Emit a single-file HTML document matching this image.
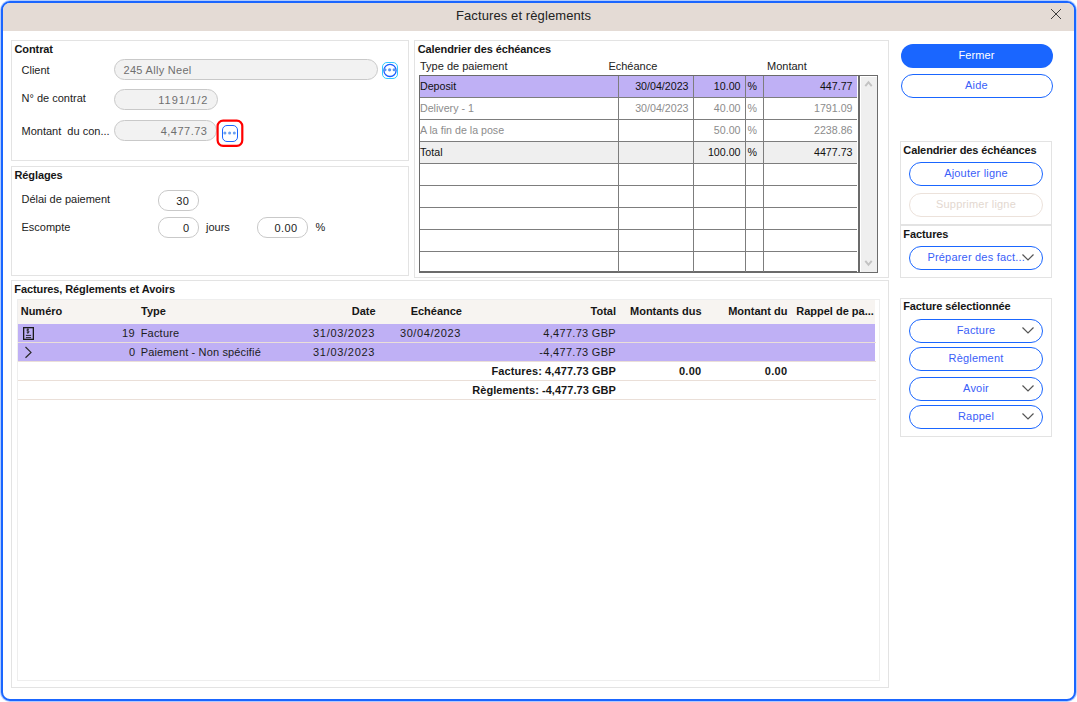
<!DOCTYPE html>
<html><head><meta charset="utf-8"><title>Factures et règlements</title>
<style>
html,body{margin:0;padding:0;background:#fff;}
body{width:1077px;height:702px;position:relative;overflow:hidden;font-family:"Liberation Sans", sans-serif;}
</style></head><body>
<div style="position:absolute;left:1px;top:1px;width:1075px;height:700px;box-sizing:border-box;border:2px solid #1a66ff;border-radius:9px;box-shadow:0 0 0 1px rgba(26,102,255,0.35);background:#fff;"></div>
<div style="position:absolute;left:3px;top:3px;width:1071px;height:28px;box-sizing:border-box;background:#e4dbd5;border-radius:7px 7px 0 0;"></div>
<div style="position:absolute;left:456.00px;top:7.40px;width:600px;line-height:17px;font-size:13px;font-weight:400;color:#222;text-align:left;white-space:nowrap;letter-spacing:0.1px;">Factures et règlements</div>
<svg style="position:absolute;left:1050px;top:8px" width="12" height="12" viewBox="0 0 12 12"><path d="M1 1L11 11M11 1L1 11" stroke="#2a2a2a" stroke-width="0.9" fill="none"/></svg>
<div style="position:absolute;left:11px;top:40px;width:398px;height:121px;box-sizing:border-box;border:1px solid #e3e3e3;"></div>
<div style="position:absolute;left:14.50px;top:42.19px;width:600px;line-height:14px;font-size:11px;font-weight:700;color:#161616;text-align:left;white-space:nowrap;letter-spacing:-0.1px;">Contrat</div>
<div style="position:absolute;left:21.50px;top:63.19px;width:600px;line-height:14px;font-size:11px;font-weight:400;color:#222;text-align:left;white-space:nowrap;">Client</div>
<div style="position:absolute;left:21.50px;top:91.19px;width:600px;line-height:14px;font-size:11px;font-weight:400;color:#222;text-align:left;white-space:nowrap;">N° de contrat</div>
<div style="position:absolute;left:21.50px;top:124.19px;width:600px;line-height:14px;font-size:11px;font-weight:400;color:#222;text-align:left;white-space:nowrap;">Montant&nbsp; du con...</div>
<div style="position:absolute;left:114px;top:59px;width:264px;height:21px;box-sizing:border-box;background:#f2f2f2;border:1px solid #c9c9c9;border-radius:11px;"></div>
<div style="position:absolute;left:123.50px;top:63.19px;width:600px;line-height:14px;font-size:11px;font-weight:400;color:#6f6f6f;text-align:left;white-space:nowrap;letter-spacing:0.3px;">245 Ally Neel</div>
<div style="position:absolute;left:114px;top:89px;width:104px;height:21px;box-sizing:border-box;background:#f2f2f2;border:1px solid #c9c9c9;border-radius:11px;"></div>
<div style="position:absolute;left:-391.70px;top:92.69px;width:600px;line-height:14px;font-size:11px;font-weight:400;color:#6f6f6f;text-align:right;white-space:nowrap;letter-spacing:1.0px;">1191/1/2</div>
<div style="position:absolute;left:114px;top:120px;width:103px;height:21px;box-sizing:border-box;background:#f2f2f2;border:1px solid #c9c9c9;border-radius:11px;"></div>
<div style="position:absolute;left:-392.50px;top:124.19px;width:600px;line-height:14px;font-size:11px;font-weight:400;color:#6f6f6f;text-align:right;white-space:nowrap;letter-spacing:0.5px;">4,477.73</div>
<svg style="position:absolute;left:381px;top:61px" width="18" height="18" viewBox="0 0 18 18"><rect x="1.5" y="1.5" width="15" height="16" rx="4.5" fill="none" stroke="#33c8ff" stroke-width="1"/><circle cx="9" cy="9.4" r="6.1" fill="none" stroke="#1a5cff" stroke-width="1.3"/><circle cx="4" cy="8.8" r="1.5" fill="#5b95ee"/><circle cx="8.6" cy="8.8" r="1.6" fill="#5b95ee"/><circle cx="13.1" cy="8.8" r="1.5" fill="#5b95ee"/></svg>
<svg style="position:absolute;left:216px;top:119px" width="28" height="29" viewBox="0 0 28 29"><rect x="1.6" y="1.6" width="24.7" height="25.2" rx="5.5" fill="none" stroke="#ff0000" stroke-width="2.2"/><rect x="6.5" y="6.5" width="15" height="16" rx="4.5" fill="none" stroke="#1a66ff" stroke-width="1"/><circle cx="8.9" cy="14" r="1.5" fill="#6aa0f0"/><circle cx="13.6" cy="14" r="1.5" fill="#6aa0f0"/><circle cx="18.3" cy="14" r="1.5" fill="#6aa0f0"/></svg>
<div style="position:absolute;left:11px;top:166px;width:398px;height:110px;box-sizing:border-box;border:1px solid #e3e3e3;"></div>
<div style="position:absolute;left:14.50px;top:167.69px;width:600px;line-height:14px;font-size:11px;font-weight:700;color:#161616;text-align:left;white-space:nowrap;letter-spacing:-0.1px;">Réglages</div>
<div style="position:absolute;left:21.50px;top:191.69px;width:600px;line-height:14px;font-size:11px;font-weight:400;color:#222;text-align:left;white-space:nowrap;">Délai de paiement</div>
<div style="position:absolute;left:21.50px;top:219.69px;width:600px;line-height:14px;font-size:11px;font-weight:400;color:#222;text-align:left;white-space:nowrap;">Escompte</div>
<div style="position:absolute;left:158px;top:190px;width:41px;height:21px;box-sizing:border-box;background:#fff;border:1px solid #c9c9c9;border-radius:10px;"></div>
<div style="position:absolute;left:-410.70px;top:194.19px;width:600px;line-height:14px;font-size:11px;font-weight:400;color:#222;text-align:right;white-space:nowrap;letter-spacing:0.4px;">30</div>
<div style="position:absolute;left:158px;top:217px;width:41px;height:21px;box-sizing:border-box;background:#fff;border:1px solid #c9c9c9;border-radius:10px;"></div>
<div style="position:absolute;left:-411.00px;top:221.19px;width:600px;line-height:14px;font-size:11px;font-weight:400;color:#222;text-align:right;white-space:nowrap;">0</div>
<div style="position:absolute;left:206.00px;top:219.69px;width:600px;line-height:14px;font-size:11px;font-weight:400;color:#222;text-align:left;white-space:nowrap;">jours</div>
<div style="position:absolute;left:257px;top:217px;width:51px;height:21px;box-sizing:border-box;background:#fff;border:1px solid #c9c9c9;border-radius:10px;"></div>
<div style="position:absolute;left:-302.50px;top:221.19px;width:600px;line-height:14px;font-size:11px;font-weight:400;color:#222;text-align:right;white-space:nowrap;letter-spacing:0.4px;">0.00</div>
<div style="position:absolute;left:315.50px;top:219.69px;width:600px;line-height:14px;font-size:11px;font-weight:400;color:#222;text-align:left;white-space:nowrap;">%</div>
<div style="position:absolute;left:414px;top:40px;width:475px;height:238px;box-sizing:border-box;border:1px solid #e3e3e3;"></div>
<div style="position:absolute;left:417.70px;top:41.99px;width:600px;line-height:14px;font-size:11px;font-weight:700;color:#161616;text-align:left;white-space:nowrap;letter-spacing:-0.1px;">Calendrier des échéances</div>
<div style="position:absolute;left:420.00px;top:58.69px;width:600px;line-height:14px;font-size:11px;font-weight:400;color:#222;text-align:left;white-space:nowrap;">Type de paiement</div>
<div style="position:absolute;left:608.40px;top:59.19px;width:600px;line-height:14px;font-size:11px;font-weight:400;color:#222;text-align:left;white-space:nowrap;">Echéance</div>
<div style="position:absolute;left:767.00px;top:59.19px;width:600px;line-height:14px;font-size:11px;font-weight:400;color:#222;text-align:left;white-space:nowrap;">Montant</div>
<div style="position:absolute;left:419px;top:75px;width:459px;height:198px;box-sizing:border-box;border:1px solid #6b6b6b;border-bottom:2px solid #6b6b6b;background:#fff;"></div>
<div style="position:absolute;left:420px;top:76px;width:437px;height:21px;box-sizing:border-box;background:#bfb0f5;"></div>
<div style="position:absolute;left:420px;top:142px;width:437px;height:21px;box-sizing:border-box;background:#efefef;"></div>
<div style="position:absolute;left:420px;top:97px;width:438px;height:1px;box-sizing:border-box;background:#7d7d7d;"></div>
<div style="position:absolute;left:420px;top:119px;width:438px;height:1px;box-sizing:border-box;background:#7d7d7d;"></div>
<div style="position:absolute;left:420px;top:141px;width:438px;height:1px;box-sizing:border-box;background:#7d7d7d;"></div>
<div style="position:absolute;left:420px;top:163px;width:438px;height:1px;box-sizing:border-box;background:#7d7d7d;"></div>
<div style="position:absolute;left:420px;top:185px;width:438px;height:1px;box-sizing:border-box;background:#7d7d7d;"></div>
<div style="position:absolute;left:420px;top:207px;width:438px;height:1px;box-sizing:border-box;background:#7d7d7d;"></div>
<div style="position:absolute;left:420px;top:229px;width:438px;height:1px;box-sizing:border-box;background:#7d7d7d;"></div>
<div style="position:absolute;left:420px;top:251px;width:438px;height:1px;box-sizing:border-box;background:#7d7d7d;"></div>
<div style="position:absolute;left:618px;top:76px;width:1px;height:196px;box-sizing:border-box;background:#7d7d7d;"></div>
<div style="position:absolute;left:693px;top:76px;width:1px;height:196px;box-sizing:border-box;background:#7d7d7d;"></div>
<div style="position:absolute;left:745px;top:76px;width:1px;height:196px;box-sizing:border-box;background:#7d7d7d;"></div>
<div style="position:absolute;left:763px;top:76px;width:1px;height:196px;box-sizing:border-box;background:#7d7d7d;"></div>
<div style="position:absolute;left:857px;top:76px;width:1px;height:196px;box-sizing:border-box;background:#fff;"></div>
<div style="position:absolute;left:858px;top:76px;width:2px;height:196px;box-sizing:border-box;background:#6b6b6b;"></div>
<div style="position:absolute;left:860px;top:76px;width:17px;height:196px;box-sizing:border-box;background:#fff;"></div>
<div style="position:absolute;left:861px;top:77px;width:16px;height:195px;box-sizing:border-box;background:#efefef;"></div>
<svg style="position:absolute;left:863px;top:79px" width="12" height="10" viewBox="0 0 12 10"><path d="M2.3 7.2L5.5 3.2L8.7 7.2" stroke="#c2c2c2" stroke-width="1.9" fill="none"/></svg>
<svg style="position:absolute;left:863px;top:258px" width="12" height="10" viewBox="0 0 12 10"><path d="M2.3 2.8L5.5 6.8L8.7 2.8" stroke="#c2c2c2" stroke-width="1.9" fill="none"/></svg>
<div style="position:absolute;left:420.00px;top:79.30px;width:600px;line-height:14px;font-size:10.67px;font-weight:400;color:#111;text-align:left;white-space:nowrap;">Deposit</div>
<div style="position:absolute;left:88.50px;top:79.30px;width:600px;line-height:14px;font-size:10.67px;font-weight:400;color:#111;text-align:right;white-space:nowrap;">30/04/2023</div>
<div style="position:absolute;left:140.50px;top:79.30px;width:600px;line-height:14px;font-size:10.67px;font-weight:400;color:#111;text-align:right;white-space:nowrap;">10.00</div>
<div style="position:absolute;left:747.50px;top:79.30px;width:600px;line-height:14px;font-size:10.67px;font-weight:400;color:#111;text-align:left;white-space:nowrap;">%</div>
<div style="position:absolute;left:252.50px;top:79.30px;width:600px;line-height:14px;font-size:10.67px;font-weight:400;color:#111;text-align:right;white-space:nowrap;">447.77</div>
<div style="position:absolute;left:420.00px;top:101.30px;width:600px;line-height:14px;font-size:10.67px;font-weight:400;color:#8c8c8c;text-align:left;white-space:nowrap;">Delivery - 1</div>
<div style="position:absolute;left:88.50px;top:101.30px;width:600px;line-height:14px;font-size:10.67px;font-weight:400;color:#8c8c8c;text-align:right;white-space:nowrap;">30/04/2023</div>
<div style="position:absolute;left:140.50px;top:101.30px;width:600px;line-height:14px;font-size:10.67px;font-weight:400;color:#8c8c8c;text-align:right;white-space:nowrap;">40.00</div>
<div style="position:absolute;left:747.50px;top:101.30px;width:600px;line-height:14px;font-size:10.67px;font-weight:400;color:#8c8c8c;text-align:left;white-space:nowrap;">%</div>
<div style="position:absolute;left:252.50px;top:101.30px;width:600px;line-height:14px;font-size:10.67px;font-weight:400;color:#8c8c8c;text-align:right;white-space:nowrap;">1791.09</div>
<div style="position:absolute;left:420.00px;top:123.30px;width:600px;line-height:14px;font-size:10.67px;font-weight:400;color:#8c8c8c;text-align:left;white-space:nowrap;">A la fin de la pose</div>
<div style="position:absolute;left:140.50px;top:123.30px;width:600px;line-height:14px;font-size:10.67px;font-weight:400;color:#8c8c8c;text-align:right;white-space:nowrap;">50.00</div>
<div style="position:absolute;left:747.50px;top:123.30px;width:600px;line-height:14px;font-size:10.67px;font-weight:400;color:#8c8c8c;text-align:left;white-space:nowrap;">%</div>
<div style="position:absolute;left:252.50px;top:123.30px;width:600px;line-height:14px;font-size:10.67px;font-weight:400;color:#8c8c8c;text-align:right;white-space:nowrap;">2238.86</div>
<div style="position:absolute;left:420.00px;top:145.30px;width:600px;line-height:14px;font-size:10.67px;font-weight:400;color:#111;text-align:left;white-space:nowrap;">Total</div>
<div style="position:absolute;left:140.50px;top:145.30px;width:600px;line-height:14px;font-size:10.67px;font-weight:400;color:#111;text-align:right;white-space:nowrap;">100.00</div>
<div style="position:absolute;left:747.50px;top:145.30px;width:600px;line-height:14px;font-size:10.67px;font-weight:400;color:#111;text-align:left;white-space:nowrap;">%</div>
<div style="position:absolute;left:252.50px;top:145.30px;width:600px;line-height:14px;font-size:10.67px;font-weight:400;color:#111;text-align:right;white-space:nowrap;">4477.73</div>
<div style="position:absolute;left:11px;top:280px;width:878px;height:408px;box-sizing:border-box;border:1px solid #e3e3e3;"></div>
<div style="position:absolute;left:14.30px;top:282.19px;width:600px;line-height:14px;font-size:11px;font-weight:700;color:#161616;text-align:left;white-space:nowrap;letter-spacing:-0.1px;">Factures, Réglements et Avoirs</div>
<div style="position:absolute;left:17px;top:299px;width:863px;height:382px;box-sizing:border-box;border:1px solid #eeeeee;"></div>
<div style="position:absolute;left:18px;top:300px;width:857px;height:24px;box-sizing:border-box;background:#f7f4f1;"></div>
<div style="position:absolute;left:18px;top:324px;width:857px;height:18px;box-sizing:border-box;background:#bfb0f5;"></div>
<div style="position:absolute;left:18px;top:342px;width:858px;height:1px;box-sizing:border-box;background:#eadfd8;"></div>
<div style="position:absolute;left:18px;top:343px;width:857px;height:18px;box-sizing:border-box;background:#bfb0f5;"></div>
<div style="position:absolute;left:18px;top:361px;width:858px;height:1px;box-sizing:border-box;background:#eadfd8;"></div>
<div style="position:absolute;left:18px;top:380px;width:858px;height:1px;box-sizing:border-box;background:#eadfd8;"></div>
<div style="position:absolute;left:18px;top:399px;width:858px;height:1px;box-sizing:border-box;background:#eadfd8;"></div>
<div style="position:absolute;left:20.70px;top:304.39px;width:600px;line-height:14px;font-size:11px;font-weight:700;color:#161616;text-align:left;white-space:nowrap;">Numéro</div>
<div style="position:absolute;left:141.00px;top:304.39px;width:600px;line-height:14px;font-size:11px;font-weight:700;color:#161616;text-align:left;white-space:nowrap;">Type</div>
<div style="position:absolute;left:-224.40px;top:304.39px;width:600px;line-height:14px;font-size:11px;font-weight:700;color:#161616;text-align:right;white-space:nowrap;">Date</div>
<div style="position:absolute;left:-138.00px;top:304.39px;width:600px;line-height:14px;font-size:11px;font-weight:700;color:#161616;text-align:right;white-space:nowrap;">Echéance</div>
<div style="position:absolute;left:16.00px;top:304.39px;width:600px;line-height:14px;font-size:11px;font-weight:700;color:#161616;text-align:right;white-space:nowrap;">Total</div>
<div style="position:absolute;left:101.50px;top:304.39px;width:600px;line-height:14px;font-size:11px;font-weight:700;color:#161616;text-align:right;white-space:nowrap;">Montants dus</div>
<div style="position:absolute;left:187.40px;top:304.39px;width:600px;line-height:14px;font-size:11px;font-weight:700;color:#161616;text-align:right;white-space:nowrap;">Montant du</div>
<div style="position:absolute;left:796.20px;top:304.39px;width:600px;line-height:14px;font-size:11px;font-weight:700;color:#161616;text-align:left;white-space:nowrap;">Rappel de pa...</div>
<div style="position:absolute;left:-464.80px;top:325.99px;width:600px;line-height:14px;font-size:11px;font-weight:400;color:#1c1c1c;text-align:right;white-space:nowrap;letter-spacing:0.5px;">19</div>
<div style="position:absolute;left:140.70px;top:325.99px;width:600px;line-height:14px;font-size:11px;font-weight:400;color:#1c1c1c;text-align:left;white-space:nowrap;letter-spacing:0.2px;">Facture</div>
<div style="position:absolute;left:-224.90px;top:325.99px;width:600px;line-height:14px;font-size:11px;font-weight:400;color:#1c1c1c;text-align:right;white-space:nowrap;letter-spacing:0.7px;">31/03/2023</div>
<div style="position:absolute;left:-139.00px;top:325.99px;width:600px;line-height:14px;font-size:11px;font-weight:400;color:#1c1c1c;text-align:right;white-space:nowrap;letter-spacing:0.6px;">30/04/2023</div>
<div style="position:absolute;left:16.00px;top:325.99px;width:600px;line-height:14px;font-size:11px;font-weight:400;color:#1c1c1c;text-align:right;white-space:nowrap;letter-spacing:0.3px;">4,477.73 GBP</div>
<div style="position:absolute;left:-464.80px;top:345.09px;width:600px;line-height:14px;font-size:11px;font-weight:400;color:#1c1c1c;text-align:right;white-space:nowrap;">0</div>
<div style="position:absolute;left:140.70px;top:345.09px;width:600px;line-height:14px;font-size:11px;font-weight:400;color:#1c1c1c;text-align:left;white-space:nowrap;letter-spacing:0.15px;">Paiement - Non spécifié</div>
<div style="position:absolute;left:-224.90px;top:345.09px;width:600px;line-height:14px;font-size:11px;font-weight:400;color:#1c1c1c;text-align:right;white-space:nowrap;letter-spacing:0.7px;">31/03/2023</div>
<div style="position:absolute;left:16.00px;top:345.09px;width:600px;line-height:14px;font-size:11px;font-weight:400;color:#1c1c1c;text-align:right;white-space:nowrap;letter-spacing:0.3px;">-4,477.73 GBP</div>
<div style="position:absolute;left:16.00px;top:363.99px;width:600px;line-height:14px;font-size:11px;font-weight:700;color:#161616;text-align:right;white-space:nowrap;letter-spacing:0.1px;">Factures: 4,477.73 GBP</div>
<div style="position:absolute;left:101.50px;top:363.99px;width:600px;line-height:14px;font-size:11px;font-weight:700;color:#161616;text-align:right;white-space:nowrap;letter-spacing:0.3px;">0.00</div>
<div style="position:absolute;left:187.40px;top:363.99px;width:600px;line-height:14px;font-size:11px;font-weight:700;color:#161616;text-align:right;white-space:nowrap;letter-spacing:0.3px;">0.00</div>
<div style="position:absolute;left:16.00px;top:382.59px;width:600px;line-height:14px;font-size:11px;font-weight:700;color:#161616;text-align:right;white-space:nowrap;letter-spacing:0.05px;">Règlements: -4,477.73 GBP</div>
<svg style="position:absolute;left:22px;top:326px" width="13" height="15" viewBox="0 0 13 15"><rect x="1.65" y="1.65" width="9.7" height="11.7" fill="none" stroke="#1a1a1a" stroke-width="1.3"/><path d="M7 3.7C6.6 3.3 6.2 3.2 5.8 3.2C5.2 3.2 4.7 3.6 4.7 4.1C4.7 5.1 7.1 4.7 7.1 5.8C7.1 6.4 6.6 6.8 5.9 6.8C5.4 6.8 4.9 6.6 4.6 6.2M5.9 2.4V7.6" stroke="#1a1a1a" stroke-width="0.85" fill="none"/><path d="M3.9 9.4H9.1M3.9 11.6H9.1" stroke="#1a1a1a" stroke-width="0.9" fill="none"/></svg>
<svg style="position:absolute;left:23px;top:345px" width="10" height="15" viewBox="0 0 10 15"><path d="M2.5 2L8 7.4L2.5 12.8" stroke="#2a2a2a" stroke-width="1.2" fill="none"/></svg>
<div style="position:absolute;left:901px;top:44px;width:152px;height:24px;box-sizing:border-box;background:#1a66ff;border-radius:12px;"></div>
<div style="position:absolute;left:676.50px;top:48.39px;width:600px;line-height:14px;font-size:11px;font-weight:400;color:#fff;text-align:center;white-space:nowrap;letter-spacing:0.1px;">Fermer</div>
<div style="position:absolute;left:901px;top:74px;width:152px;height:24px;box-sizing:border-box;border:1px solid #1a66ff;border-radius:12px;background:#fff;"></div>
<div style="position:absolute;left:676.50px;top:77.99px;width:600px;line-height:14px;font-size:11px;font-weight:400;color:#3a60f8;text-align:center;white-space:nowrap;letter-spacing:0.2px;">Aide</div>
<div style="position:absolute;left:900px;top:141px;width:152px;height:84px;box-sizing:border-box;border:1px solid #e3e3e3;"></div>
<div style="position:absolute;left:903.30px;top:143.19px;width:600px;line-height:14px;font-size:11px;font-weight:700;color:#161616;text-align:left;white-space:nowrap;letter-spacing:-0.1px;">Calendrier des échéances</div>
<div style="position:absolute;left:909px;top:162px;width:134px;height:24px;box-sizing:border-box;border:1px solid #1a66ff;border-radius:12px;background:#fff;"></div>
<div style="position:absolute;left:676.00px;top:165.69px;width:600px;line-height:14px;font-size:11px;font-weight:400;color:#3a60f8;text-align:center;white-space:nowrap;letter-spacing:0.2px;">Ajouter ligne</div>
<div style="position:absolute;left:909px;top:193px;width:134px;height:24px;box-sizing:border-box;border:1px solid #ece2db;border-radius:12px;"></div>
<div style="position:absolute;left:676.00px;top:196.69px;width:600px;line-height:14px;font-size:11px;font-weight:400;color:#e3d8d0;text-align:center;white-space:nowrap;letter-spacing:0.2px;">Supprimer ligne</div>
<div style="position:absolute;left:900px;top:225px;width:152px;height:53px;box-sizing:border-box;border:1px solid #e3e3e3;"></div>
<div style="position:absolute;left:903.30px;top:226.99px;width:600px;line-height:14px;font-size:11px;font-weight:700;color:#161616;text-align:left;white-space:nowrap;letter-spacing:-0.1px;">Factures</div>
<div style="position:absolute;left:909px;top:246px;width:134px;height:24px;box-sizing:border-box;border:1px solid #1a66ff;border-radius:12px;background:#fff;"></div>
<div style="position:absolute;left:927.40px;top:249.69px;width:600px;line-height:14px;font-size:11px;font-weight:400;color:#3a60f8;text-align:left;white-space:nowrap;letter-spacing:0.2px;">Préparer des fact...</div>
<svg style="position:absolute;left:1021px;top:253px" width="14" height="9" viewBox="0 0 14 9"><path d="M1.5 1.5L7 7L12.5 1.5" stroke="#555" stroke-width="1.2" fill="none"/></svg>
<div style="position:absolute;left:900px;top:298px;width:152px;height:139px;box-sizing:border-box;border:1px solid #e3e3e3;"></div>
<div style="position:absolute;left:903.20px;top:299.19px;width:600px;line-height:14px;font-size:11px;font-weight:700;color:#161616;text-align:left;white-space:nowrap;letter-spacing:-0.1px;">Facture sélectionnée</div>
<div style="position:absolute;left:909px;top:319px;width:134px;height:24px;box-sizing:border-box;border:1px solid #1a66ff;border-radius:12px;background:#fff;"></div>
<div style="position:absolute;left:676.00px;top:322.69px;width:600px;line-height:14px;font-size:11px;font-weight:400;color:#3a60f8;text-align:center;white-space:nowrap;letter-spacing:0.2px;">Facture</div>
<svg style="position:absolute;left:1021px;top:326px" width="14" height="9" viewBox="0 0 14 9"><path d="M1.5 1.5L7 7L12.5 1.5" stroke="#555" stroke-width="1.2" fill="none"/></svg>
<div style="position:absolute;left:909px;top:347px;width:134px;height:24px;box-sizing:border-box;border:1px solid #1a66ff;border-radius:12px;background:#fff;"></div>
<div style="position:absolute;left:676.00px;top:350.69px;width:600px;line-height:14px;font-size:11px;font-weight:400;color:#3a60f8;text-align:center;white-space:nowrap;letter-spacing:0.2px;">Règlement</div>
<div style="position:absolute;left:909px;top:377px;width:134px;height:24px;box-sizing:border-box;border:1px solid #1a66ff;border-radius:12px;background:#fff;"></div>
<div style="position:absolute;left:676.00px;top:380.69px;width:600px;line-height:14px;font-size:11px;font-weight:400;color:#3a60f8;text-align:center;white-space:nowrap;letter-spacing:0.2px;">Avoir</div>
<svg style="position:absolute;left:1021px;top:384px" width="14" height="9" viewBox="0 0 14 9"><path d="M1.5 1.5L7 7L12.5 1.5" stroke="#555" stroke-width="1.2" fill="none"/></svg>
<div style="position:absolute;left:909px;top:405px;width:134px;height:24px;box-sizing:border-box;border:1px solid #1a66ff;border-radius:12px;background:#fff;"></div>
<div style="position:absolute;left:676.00px;top:408.69px;width:600px;line-height:14px;font-size:11px;font-weight:400;color:#3a60f8;text-align:center;white-space:nowrap;letter-spacing:0.2px;">Rappel</div>
<svg style="position:absolute;left:1021px;top:412px" width="14" height="9" viewBox="0 0 14 9"><path d="M1.5 1.5L7 7L12.5 1.5" stroke="#555" stroke-width="1.2" fill="none"/></svg>
</body></html>
